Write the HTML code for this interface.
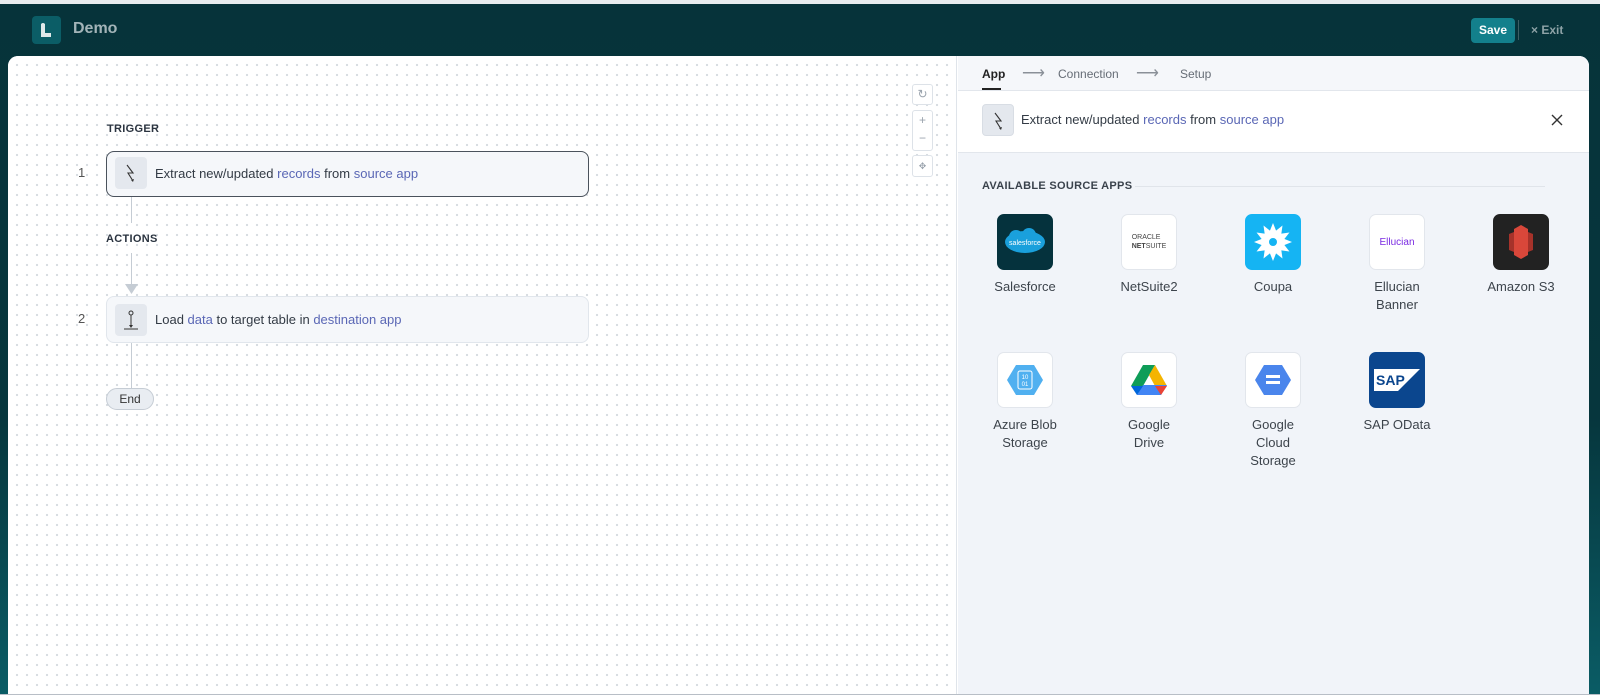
<!DOCTYPE html>
<html><head><meta charset="utf-8"><style>
*{box-sizing:border-box;margin:0;padding:0}
body{width:1600px;height:695px;overflow:hidden;font-family:"Liberation Sans",sans-serif;background:linear-gradient(180deg,#06333a 0%,#06363d 60%,#0a5c65 100%);position:relative}
.top{position:absolute;left:0;top:0;width:1600px;height:4px;background:#e8ecef}
.logo{position:absolute;left:32px;top:16px;width:29px;height:28px;background:#0b5d66;border-radius:4px}
.demo{position:absolute;left:73px;top:20px;font-size:16px;font-weight:bold;color:#a3b4b8}
.save{position:absolute;left:1471px;top:18px;width:44px;height:25px;background:#13808c;border-radius:4px;color:#fff;font-weight:bold;font-size:12px;text-align:center;line-height:25px}
.sep{position:absolute;left:1518px;top:20px;width:1px;height:20px;background:#3d5f64}
.exit{position:absolute;left:1531px;top:23px;font-size:12px;font-weight:bold;color:#8ea3a7}
.card{position:absolute;left:8px;top:56px;width:1581px;height:638px;background:#fff;border-radius:10px 10px 0 0;overflow:hidden}
.canvas{position:absolute;left:0;top:0;width:949px;height:100%;background-color:#fff;background-image:radial-gradient(circle,#d6dbe0 1px,transparent 1.3px);background-size:10px 10px;background-position:4px 4px;border-right:1px solid #dfe4ea}
.panel{position:absolute;left:950px;top:0;right:0;height:100%;background:#f1f4f9}
.lbl{position:absolute;font-size:11px;font-weight:bold;color:#2b3440;letter-spacing:.3px}
.node{position:absolute;left:98px;width:483px;background:#f5f7fa;border-radius:8px}
.ic{position:absolute;left:8px;width:32px;height:32px;background:#e4e8ee;border-radius:4px}
.nt{position:absolute;left:48px;font-size:13px;color:#333b45}
.b{color:#5a67b5}
.num{position:absolute;font-size:13px;color:#555}
.vl{position:absolute;left:123px;width:1px;background:#c5ccd4}
.ctrl{position:absolute;left:904px;width:21px;background:#fff;border:1px solid #dde2e8;border-radius:3px;color:#9aa3ad;font-size:12px;text-align:center}
.tab{position:absolute;top:11px;font-size:12px;color:#666d76}
.arr{position:absolute;top:7px;font-size:16px;color:#8a9098}
.app{position:absolute;width:56px;text-align:center}
.app .box{width:56px;height:56px;border-radius:7px;border:1px solid #e2e6ec;background:#fff;display:flex;align-items:center;justify-content:center;overflow:hidden}
.app .t{position:absolute;top:64px;left:-30px;width:116px;font-size:13px;color:#3d444c;line-height:18px}
</style></head><body>
<div class="top"></div>
<div class="logo"><svg width="29" height="28"><path d="M9 8h4v9h6v4H9z" fill="#dfe9ea"/><circle cx="11" cy="9" r="2" fill="#dfe9ea"/></svg></div>
<div class="demo">Demo</div>
<div class="save">Save</div><div class="sep"></div><div class="exit">× Exit</div>
<div class="card">
 <div class="canvas">
  <div class="lbl" style="left:99px;top:67px">TRIGGER</div>
  <div class="num" style="left:70px;top:109px">1</div>
  <div class="node" style="top:95px;height:46px;border:1px solid #4a525c"><div class="ic" style="top:5px"><svg width="32" height="32"><path d="M12 8l6 8-5 0 5 8" stroke="#333" fill="none" stroke-width="1.1"/><path d="M16 23l2 2 1-3" fill="#333"/></svg></div><div class="nt" style="top:14px">Extract new/updated <span class="b">records</span> from <span class="b">source app</span></div></div>
  <div class="vl" style="top:141px;height:26px"></div>
  <div class="lbl" style="left:98px;top:177px">ACTIONS</div>
  <div class="vl" style="top:197px;height:32px"></div>
  <svg style="position:absolute;left:117px;top:228px" width="13" height="10"><path d="M0 0h13L6.5 10z" fill="#c5ccd4"/></svg>
  <div class="num" style="left:70px;top:255px">2</div>
  <div class="node" style="top:240px;height:47px;border:1px solid #e1e6ec"><div class="ic" style="top:7px"><svg width="32" height="32"><circle cx="16" cy="9" r="2" stroke="#333" fill="none"/><path d="M16 11v11M9 25h14" stroke="#333"/><path d="M14 21h4l-2 3z" fill="#333"/></svg></div><div class="nt" style="top:15px">Load <span class="b">data</span> to target table in <span class="b">destination app</span></div></div>
  <div class="vl" style="top:287px;height:45px"></div>
  <div style="position:absolute;left:98px;top:332px;width:48px;height:22px;border:1px solid #c5ccd4;background:#e9edf2;border-radius:11px;font-size:12px;color:#333;text-align:center;line-height:20px">End</div>
  <div class="ctrl" style="top:28px;height:21px;line-height:19px">↻</div>
  <div class="ctrl" style="top:54px;height:41px;line-height:18px">+<br>−</div>
  <div class="ctrl" style="top:99px;height:22px;line-height:20px;font-size:9px">✥</div>
 </div>
 <div class="panel">
  <div style="position:absolute;left:0;top:0;right:0;height:35px;background:#f5f7fa;border-bottom:1px solid #e2e6ec"></div>
  <div class="tab" style="left:24px;color:#222;font-weight:bold">App</div>
  <div style="position:absolute;left:24px;top:32px;width:19px;height:2px;background:#222"></div>
  <div class="arr" style="left:64px">⟶</div>
  <div class="tab" style="left:100px">Connection</div>
  <div class="arr" style="left:178px">⟶</div>
  <div class="tab" style="left:222px">Setup</div>
  <div style="position:absolute;left:0;top:35px;right:0;height:62px;background:#fff;border-bottom:1px solid #e2e6ec"></div>
  <div class="ic" style="left:24px;top:48px;width:32px;height:32px;border:1px solid #d8dde4"><svg width="32" height="32"><path d="M12 8l6 8-5 0 5 8" stroke="#333" fill="none" stroke-width="1.1"/><path d="M16 23l2 2 1-3" fill="#333"/></svg></div>
  <div style="position:absolute;left:63px;top:56px;font-size:13px;color:#333b45">Extract new/updated <span class="b">records</span> from <span class="b">source app</span></div>
  <svg style="position:absolute;left:593px;top:58px" width="12" height="12"><path d="M1 1l10 10M11 1L1 11" stroke="#333" stroke-width="1.4"/></svg>
  <div class="lbl" style="left:24px;top:124px;color:#3a424c">AVAILABLE SOURCE APPS</div>
  <div style="position:absolute;left:177px;top:130px;width:410px;height:1px;background:#e0e4ea"></div>

  <div class="app" style="left:39px;top:158px"><div class="box" style="background:#05323d;border-color:#05323d"><svg width="44" height="30"><ellipse cx="22" cy="15" rx="20" ry="11" fill="#1aa0dc"/><circle cx="13" cy="10" r="7" fill="#1aa0dc"/><circle cx="26" cy="8" r="7" fill="#1aa0dc"/><text x="22" y="18" font-size="7" fill="#fff" text-anchor="middle" font-family="Liberation Sans">salesforce</text></svg></div><div class="t">Salesforce</div></div>
  <div class="app" style="left:163px;top:158px"><div class="box"><div style="font-size:7px;color:#444;line-height:9px;text-align:left">ORACLE<br><b>NET</b>SUITE</div></div><div class="t">NetSuite2</div></div>
  <div class="app" style="left:287px;top:158px"><div class="box" style="background:#15b4f3;border-color:#15b4f3"><svg width="40" height="40" viewBox="-20 -20 40 40"><g fill="#fff"><circle r="11"/><path id="p" d="M-4 -9L0 -19L4 -9z"/><use href="#p" transform="rotate(30)"/><use href="#p" transform="rotate(60)"/><use href="#p" transform="rotate(90)"/><use href="#p" transform="rotate(120)"/><use href="#p" transform="rotate(150)"/><use href="#p" transform="rotate(180)"/><use href="#p" transform="rotate(210)"/><use href="#p" transform="rotate(240)"/><use href="#p" transform="rotate(270)"/><use href="#p" transform="rotate(300)"/><use href="#p" transform="rotate(330)"/></g><circle r="4" fill="#15b4f3"/></svg></div><div class="t">Coupa</div></div>
  <div class="app" style="left:411px;top:158px"><div class="box"><span style="font-size:10px;color:#7a2be2">Ellucian</span></div><div class="t">Ellucian<br>Banner</div></div>
  <div class="app" style="left:535px;top:158px"><div class="box" style="background:#222;border-color:#222"><svg width="30" height="38"><path d="M8 6l7-4 7 4v26l-7 4-7-4z" fill="#d9473a"/><path d="M3 11l5-2v20l-5-2zM27 11l-5-2v20l5-2z" fill="#a6322a"/></svg></div><div class="t">Amazon S3</div></div>

  <div class="app" style="left:39px;top:296px"><div class="box"><svg width="36" height="32"><path d="M9 1h18l9 15-9 15H9L0 16z" fill="#50b0f0"/><rect x="11" y="7" width="14" height="18" rx="2" fill="none" stroke="#fff"/><text x="18" y="15" font-size="6" fill="#fff" text-anchor="middle" font-family="Liberation Sans">10</text><text x="18" y="22" font-size="6" fill="#fff" text-anchor="middle" font-family="Liberation Sans">01</text></svg></div><div class="t">Azure Blob<br>Storage</div></div>
  <div class="app" style="left:163px;top:296px"><div class="box"><svg width="36" height="32"><path d="M12 1h12l-12 21H0z" fill="#0f9d58"/><path d="M24 1l12 21H24L18 11z" fill="#f4b400"/><path d="M6 31l6-10h24l-6 10z" fill="#4285f4"/><path d="M0 22h12l-6 9z" fill="#0066da"/><path d="M36 22l-6 9-6-9z" fill="#ea4335"/></svg></div><div class="t">Google<br>Drive</div></div>
  <div class="app" style="left:287px;top:296px"><div class="box"><svg width="36" height="32"><path d="M9 1h18l9 15-9 15H9L0 16z" fill="#4a85ec"/><rect x="11" y="11" width="14" height="3" fill="#fff"/><rect x="11" y="17" width="14" height="3" fill="#fff"/></svg></div><div class="t">Google<br>Cloud<br>Storage</div></div>
  <div class="app" style="left:411px;top:296px"><div class="box" style="background:#0b468e;border-color:#0b468e"><svg width="46" height="22"><path d="M0 0h46L24 22H0z" fill="#fff"/><text x="2" y="16" font-size="14" font-weight="bold" fill="#0b468e" font-family="Liberation Sans">SAP</text></svg></div><div class="t">SAP OData</div></div>
 </div>
</div>
<div style="position:absolute;left:0;top:694px;width:1600px;height:1px;background:#b8bec6"></div>
</body></html>
